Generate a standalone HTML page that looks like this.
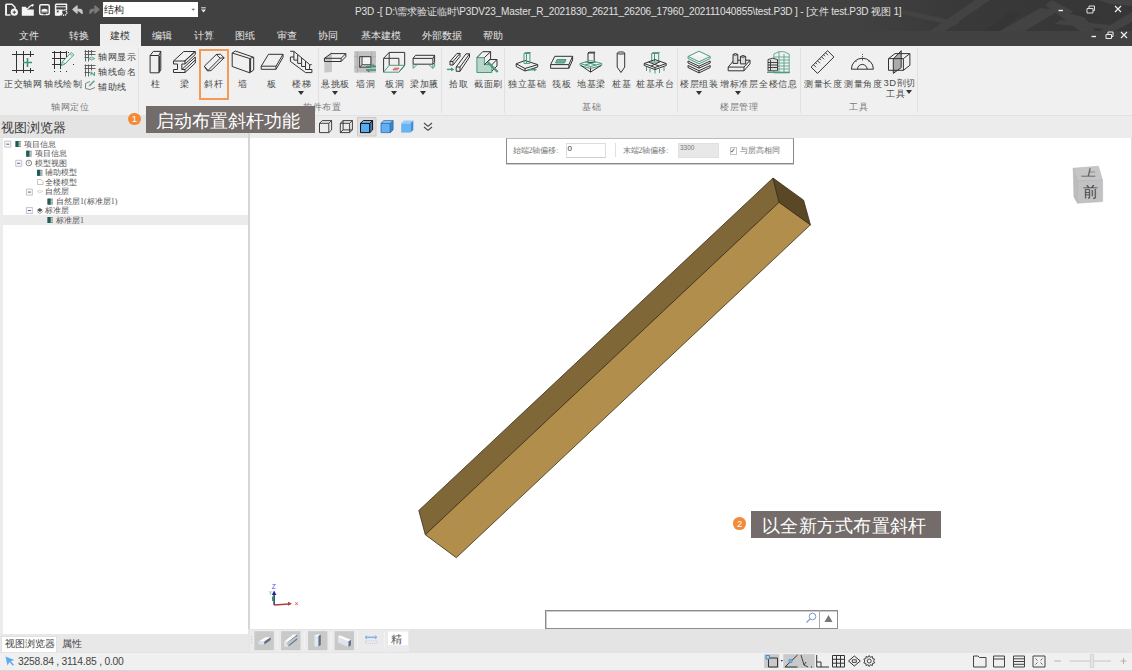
<!DOCTYPE html>
<html><head><meta charset="utf-8">
<style>
*{margin:0;padding:0;box-sizing:border-box}
html,body{width:1132px;height:671px;overflow:hidden;background:#f0f0f0;font-family:"Liberation Sans",sans-serif;color:#333}
.a{position:absolute}
.t{position:absolute;white-space:nowrap;line-height:1}
.tab{position:absolute;top:31px;font-size:10px;line-height:10px;color:#e6e6e6;white-space:nowrap}
.lbl{position:absolute;top:78.5px;font-size:9.4px;letter-spacing:0.6px;color:#4a4a4a;white-space:nowrap;line-height:10px}
.glbl{position:absolute;top:102px;font-size:9.4px;letter-spacing:0.6px;color:#7a7a7a;white-space:nowrap;line-height:10px}
.sep{position:absolute;top:48px;width:1px;height:65px;background:#e0e0e0}
.arr{position:absolute;top:91px;width:0;height:0;border-left:3.5px solid transparent;border-right:3.5px solid transparent;border-top:4.5px solid #333;margin-left:0.5px}
.tr{position:absolute;font-size:8px;line-height:9px;color:#555;white-space:nowrap;font-family:"Liberation Serif",serif}
.sl{position:absolute;font-size:9.4px;letter-spacing:0.6px;line-height:10px;color:#444;white-space:nowrap}
</style></head><body>
<!-- title + tabs -->
<div class="a" style="left:0;top:0;width:1132px;height:46px;background:#414141"></div>
<svg class="a" style="left:0;top:0" width="1132" height="31" viewBox="0 0 1132 31">
<defs><linearGradient id="tg" x1="0" x2="1" y1="0" y2="0"><stop offset="0" stop-color="#393939" stop-opacity="0"/><stop offset="0.35" stop-color="#393939" stop-opacity="1"/><stop offset="1" stop-color="#363636"/></linearGradient></defs>
<rect x="860" y="0" width="272" height="31" fill="url(#tg)"/>
<g fill="#434343">
<path d="M930 31L975 0H990L945 31Z"/>
<path d="M1000 31L1040 8L1060 10L1025 31Z"/>
<path d="M1052 0L1085 18L1095 31H1080L1045 5Z"/>
<path d="M1100 31L1132 12V22L1115 31Z"/>
<path d="M905 10L960 22L955 26L900 14Z"/>
<path d="M1060 20L1110 25L1105 29L1055 24Z"/>
<path d="M1098 0H1132V6L1110 4Z"/>
</g>
<g fill="#353535"><path d="M985 31L1010 12L1020 14L1000 31Z"/><path d="M1075 10L1100 15L1095 19L1070 14Z"/></g>
</svg>
<div class="a" style="left:103px;top:2px;width:95px;height:14.8px;background:#fff"></div>
<div class="t" style="left:104px;top:5px;font-size:10px;color:#222">结构</div>


<div class="t" style="left:355px;top:7px;font-size:10px;letter-spacing:-0.14px;color:#e0e0e0">P3D -[ D:\需求验证临时\P3DV23_Master_R_2021830_26211_26206_17960_202111040855\test.P3D ] - [文件 test.P3D 视图 1]</div>
<div class="a" style="left:100px;top:24px;width:41px;height:22px;background:#efefef"></div>
<div class="tab" style="left:19px">文件</div>
<div class="tab" style="left:69px">转换</div>
<div class="tab" style="left:110px;color:#333">建模</div>
<div class="tab" style="left:152px">编辑</div>
<div class="tab" style="left:194px">计算</div>
<div class="tab" style="left:235px">图纸</div>
<div class="tab" style="left:277px">审查</div>
<div class="tab" style="left:318px">协同</div>
<div class="tab" style="left:361px">基本建模</div>
<div class="tab" style="left:422px">外部数据</div>
<div class="tab" style="left:483px">帮助</div>

<!-- ribbon -->
<div class="a" style="left:0;top:46px;width:1132px;height:69px;background:#f0f0f0"></div>
<div class="lbl" style="left:4px">正交轴网</div>
<div class="lbl" style="left:44px">轴线绘制</div>
<div class="sl" style="left:98px;top:52px">轴网显示</div>
<div class="sl" style="left:98px;top:67px">轴线命名</div>
<div class="sl" style="left:98px;top:82px">辅助线</div>
<div class="glbl" style="left:51px">轴网定位</div>
<div class="sep" style="left:138px"></div>
<div class="lbl" style="left:151px">柱</div>
<div class="lbl" style="left:180px">梁</div>
<div class="a" style="left:199px;top:49px;width:30px;height:51px;border:2px solid #f39a56"></div>
<div class="lbl" style="left:204px">斜杆</div>
<div class="lbl" style="left:238px">墙</div>
<div class="lbl" style="left:267px">板</div>
<div class="lbl" style="left:292px">楼梯</div>
<div class="arr" style="left:297px"></div>
<div class="sep" style="left:318px"></div>
<div class="lbl" style="left:321px">悬挑板</div>
<div class="arr" style="left:331px"></div>
<div class="lbl" style="left:356px">墙洞</div>
<div class="lbl" style="left:385px">板洞</div>
<div class="arr" style="left:390px"></div>
<div class="lbl" style="left:410px">梁加腋</div>
<div class="arr" style="left:419px"></div>
<div class="glbl" style="left:303px">构件布置</div>
<div class="sep" style="left:441px"></div>
<div class="lbl" style="left:449px">拾取</div>
<div class="lbl" style="left:474px">截面刷</div>
<div class="sep" style="left:504px"></div>
<div class="lbl" style="left:508px">独立基础</div>
<div class="lbl" style="left:552px">筏板</div>
<div class="lbl" style="left:577px">地基梁</div>
<div class="lbl" style="left:612px">桩基</div>
<div class="lbl" style="left:636px">桩基承台</div>
<div class="glbl" style="left:582px">基础</div>
<div class="sep" style="left:677px"></div>
<div class="lbl" style="left:680px">楼层组装</div>
<div class="arr" style="left:695px"></div>
<div class="lbl" style="left:720px">增标准层</div>
<div class="arr" style="left:734px"></div>
<div class="lbl" style="left:759px">全楼信息</div>
<div class="glbl" style="left:720px">楼层管理</div>
<div class="sep" style="left:800px"></div>
<div class="lbl" style="left:804px">测量长度</div>
<div class="lbl" style="left:844px">测量角度</div>
<div class="lbl" style="left:883.5px;top:78px">3D剖切</div>
<div class="lbl" style="left:886px;top:89px">工具</div>
<div class="arr" style="left:905px;top:90px"></div>
<div class="glbl" style="left:849px">工具</div>
<div class="sep" style="left:917px"></div>

<!-- left panel -->
<div class="a" style="left:0;top:115px;width:248px;height:23px;background:#e4e4e4"></div>
<div class="t" style="left:1px;top:121px;font-size:13.3px;color:#3a3a3a">视图浏览器</div>
<div class="a" style="left:0;top:138px;width:248px;height:496px;background:#fff;border-left:3px solid #ececec"></div>
<div class="a" style="left:247.5px;top:116px;width:2.5px;height:513px;background:#d6d6d6"></div>
<div class="a" style="left:247.5px;top:629px;width:2.5px;height:23px;background:#e6e6e6"></div>
<div class="a" style="left:3px;top:215.4px;width:245px;height:10px;background:#ebebeb"></div>
<div class="a" style="left:0;top:634px;width:248px;height:18px;background:#e8e8e8"></div>
<div class="a" style="left:1px;top:636px;width:56px;height:15.5px;background:#fff;border:1px solid #e0e0e0;border-bottom:none"></div>
<div class="t" style="left:4.8px;top:639px;font-size:9.5px;color:#444">视图浏览器</div>
<div class="t" style="left:61.6px;top:639px;font-size:9.5px;color:#444">属性</div>


<!-- tree -->
<div class="tr" style="left:24px;top:139.5px">项目信息</div>
<div class="tr" style="left:34.5px;top:149px">项目信息</div>
<div class="tr" style="left:34.5px;top:158.5px">模型视图</div>
<div class="tr" style="left:45px;top:168px">辅助模型</div>
<div class="tr" style="left:45px;top:177.5px">全楼模型</div>
<div class="tr" style="left:45px;top:187px">自然层</div>
<div class="tr" style="left:56px;top:196.5px">自然层1(标准层1)</div>
<div class="tr" style="left:45px;top:206px">标准层</div>
<div class="tr" style="left:56px;top:215.5px">标准层1</div>

<!-- view toolbar -->
<div class="a" style="left:250px;top:115px;width:882px;height:23px;background:#ececec;border-top:1px solid #e2e2e2"></div>
<div class="a" style="left:357px;top:117px;width:19px;height:19px;background:#d8d8d8;border:1px solid #cfcfcf"></div>

<!-- viewport -->
<div class="a" style="left:250px;top:138px;width:881px;height:491px;background:#fff"></div>
<div class="a" style="left:1131px;top:138px;width:1px;height:491px;background:#dcdcdc"></div>

<!-- bottom toolbar -->
<div class="a" style="left:250px;top:629px;width:882px;height:23px;background:#e4e4e4"></div>
<div class="a" style="left:250px;top:629.5px;width:159px;height:22px;background:#ebebeb"></div>
<!-- status -->
<div class="a" style="left:0;top:652px;width:1132px;height:19px;background:#f0f0f0;border-top:1px solid #e4e4e4;border-bottom:1px solid #d8d8d8"></div>
<div class="t" style="left:18px;top:656.5px;font-size:10.3px;letter-spacing:-0.22px;color:#444">3258.84 , 3114.85 , 0.00</div>


<svg class="a" style="left:0;top:0" width="1132" height="671" viewBox="0 0 1132 671" fill="none" stroke="#333" stroke-width="1" stroke-linejoin="round">
<!-- quick access -->
<path d="M5.8 4.2H12L15 7.2V9M5.8 4.2V15H10.5" stroke="#f0f0f0" stroke-width="1.5" fill="none"/>
<path d="M6.5 5V14.5" stroke="#f0f0f0" stroke-width="1"/>
<circle cx="14.3" cy="12.2" r="3.6" fill="#f4f4f4" stroke="none"/>
<path d="M12.6 12.2H16M14.3 10.5V13.9" stroke="#414141" stroke-width="1"/>
<path d="M21.8 6.7H25.5L26.8 8H28.5L27 9.5H33.8V15.7H21.8Z" fill="#f4f4f4" stroke="none"/>
<path d="M28 8.5Q29.5 5.8 32.5 5.2" stroke="#f4f4f4" stroke-width="1.3"/>
<path d="M31.5 3.8L34.2 4.8L32.3 7Z" fill="#f4f4f4" stroke="none"/>
<rect x="39.7" y="4.8" width="9.6" height="9.8" rx="1.5" stroke="#f4f4f4" stroke-width="1.5"/>
<path d="M41.5 11.5V9.8Q44.5 7.8 47.5 9.8V11.5Z" fill="#f4f4f4" stroke="none"/>
<path d="M41.5 12H47.5" stroke="#f4f4f4" stroke-width="0.8"/>
<rect x="43" y="13" width="3" height="1.3" fill="#414141" stroke="none"/>
<path d="M55.6 4.2H66.5V10M55.6 4.2V15H60" stroke="#f4f4f4" stroke-width="1.5"/>
<path d="M55.6 6.8H66.5" stroke="#f4f4f4" stroke-width="1"/>
<path d="M55.6 9.5H62V15.4H55.6Z" fill="#f4f4f4" stroke="none"/>
<rect x="56.8" y="10.6" width="1.8" height="1.8" fill="#414141" stroke="none"/>
<circle cx="64.2" cy="12.6" r="2.6" fill="none" stroke="#f4f4f4" stroke-width="1.6" stroke-dasharray="1.2 0.8"/>
<path d="M73 9.5L77 6V13ZM76 9.5H80Q82 9.5 82 12V14" fill="#c8c8c8" stroke="#c8c8c8" stroke-width="1.4"/>
<path d="M99 9.5L95 6V13ZM96 9.5H92Q90 9.5 90 12V14" fill="#7a7a7a" stroke="#7a7a7a" stroke-width="1.4"/>
<path d="M191.5 8.8H195L193.25 10.8Z" fill="#666" stroke="none"/>
<path d="M201.2 7.8H205.8" stroke="#e8e8e8" stroke-width="1"/>
<path d="M201 9.5H206L203.5 12.5Z" fill="#e8e8e8" stroke="none"/>
<!-- 正交轴网 -->
<path d="M12 54.5H34M12 70.5H34M16.5 51V73M23.5 51V73M30.5 51V57M30.5 68V73" stroke="#333"/>
<path d="M27.5 58V67M23 62.5H32" stroke="#3f9478" stroke-width="1.6"/>
<!-- 轴线绘制 -->
<path d="M52 52.5H67M52 58.5H66M52 64.5H63M54.5 51V69M60.5 51V69M66.5 51V57"/>
<path d="M68 52.5H71M68 58.5H71M54.5 71V72.5M60.5 71V72.5M66.5 71V72.5M73 64.5H74" stroke-dasharray="1 2"/>
<path d="M61.5 65.5L62.3 61.8L71.2 52.5L73.8 54.8L65 64Z" fill="#eef6f2" stroke="#3f9478" stroke-width="0.9"/>
<path d="M62.3 61.8L65 64M70 53.8L72.5 56" stroke="#3f9478" stroke-width="0.7"/>
<!-- small buttons -->
<g stroke="#555" stroke-width="0.9">
<path d="M84.5 51.5H95.5M84.5 54.5H95.5M84.5 57.5H88.5M85.5 50V61.5M88.5 50V61.5M91.5 50V55.5"/>
<path d="M84.5 65.5H95.5M84.5 68.5H95.5M84.5 72.5H90M85.5 64.5V76.5M88.5 64.5V76.5M91.5 64.5V70.5"/>
</g>
<path d="M88.5 58.5Q91.5 55.5 95 58.5Q91.5 61.5 88.5 58.5Z" fill="#bfdccf" stroke="#5aa58b" stroke-width="0.8"/>
<path d="M91 75.5V72L94.5 75.5V72" stroke="#5aa58b" stroke-width="1.1"/>
<path d="M85.5 83.5L90 81.5M85.5 83.5V88.5Q90 91 95 87.5" stroke="#666" stroke-width="0.8"/>
<path d="M89.2 86L94.4 80.8" stroke="#5aa58b" stroke-width="1.6"/>
<!-- 柱 -->
<path d="M150.1 55.5H158.9V72.8H150.1ZM150.1 55.5L153.3 51.4H160.8L158.9 55.5M160.8 51.4V69.8L158.9 72.8M159.6 56V72"/>
<!-- 梁 -->
<path d="M173.5 61H185V64H181.8V69.5H185V72.5H173.5V69.5H177.5V64H173.5Z"/>
<path d="M173.5 61L183.8 51.5H195.3L185 61M195.3 51.5V54.5L185 64M195.3 54.5M185 69.5L195.3 60V63L185 72.5M181.8 69.5L195.3 57V60M184 61.5L194 52.5"/>
<!-- 斜杆 -->
<path d="M204.3 66.2L216.3 54.5L220.3 54.2L224.2 57.8L211 70.6L207.4 70.9ZM216.3 54.5L220.2 58.2L224.2 57.8M220.2 58.2L208 70.5M204.3 66.2L208 70.5"/>
<!-- 墙 -->
<path d="M232.2 53L249.7 58.5V72.8L232.2 66.5ZM232.2 53L235.4 51L253.7 57.3L249.7 58.5M253.7 57.3V70L249.7 72.8M250.6 59V72"/>
<!-- 板 -->
<path d="M261.2 66.2L268.5 54.3H283L276 66.2ZM261.2 66.2V69.3H276L283 57.4V54.3M276 66.2V69.3"/>
<!-- 楼梯 -->
<path d="M290.2 51.3H293.9L309.8 64.7H311.7M293.9 51.8V57M297.7 54.8V60.1M301.6 58V63.4M305.5 61.3V66.5M309.6 64.7V69.5" stroke-width="1"/>
<path d="M290.4 57H293.9V60.1H297.7V63.4H301.6V66.5H305.5V69.5H311.9V72.6H305.6L290.4 61.4Z" stroke-width="1"/>
</svg>

<svg class="a" style="left:0;top:0" width="1132" height="671" viewBox="0 0 1132 671" fill="none" stroke="#333" stroke-width="1" stroke-linejoin="round">
<!-- 悬挑板 -->
<path d="M324.4 61.5L331.9 65.5V51.5L324.4 58.5Z" fill="#c4c4c4" stroke="none"/>
<path d="M324.4 72.6V61.5L331.9 65.5V72" fill="#c8c8c8" stroke="none"/>
<path d="M324.4 58.3L331.1 53.6H345.8L341.1 58.3ZM324.4 58.3V61.5H341.1V58.3M341.1 61.5L345.8 56.7V53.6"/>
<!-- 墙洞 -->
<rect x="354.2" y="51.2" width="21.8" height="21.4" fill="#c2c2c2" stroke="none"/>
<path d="M357.4 51.2V72.6M371.7 51.2V72.6M354.2 56.7H376M354.2 67.1H376" stroke="#a8a8a8" stroke-width="0.8"/>
<rect x="359.7" y="56.7" width="11.2" height="10.4" fill="#f4f4f4" stroke="#333"/>
<path d="M362 56.7V64.8H370.9M362 64.8L359.7 67.1"/>
<path d="M366 66.5H376M372.5 64.5L375 66.5M376 70H366M369.5 72L367 70" stroke="#3f9478" stroke-width="1.5"/>
<!-- 板洞 -->
<path d="M383.6 58.3L389.2 52.4H404.7V65.1L398.9 72.2M383.6 58.3V72.2M383.6 58.3H398.9V65M389.2 52.4V65.1"/>
<path d="M383.6 72.2H398.9L404.9 65.3H389.2Z" stroke="#4a9a7e"/>
<path d="M393 69.8L394.5 68.2H399L397.5 69.8Z" stroke="#e04545" stroke-width="1"/>
<!-- 梁加腋 -->
<path d="M413.1 58.4H432.9V64.2H413.1ZM413.1 58.4L415.5 55.3H434.6L432.9 58.4M434.6 55.3V62.5L432.9 64.2"/>
<path d="M413.1 64.2V68.3L417.5 64.2M432.9 64.2V68.3L428.5 64.2M434.6 62.5V66.5L432.9 68.3" stroke="#4a9a7e"/>
<!-- 拾取 -->
<path d="M450 61.5L457 53.4H460L460 56.5L453 65H450ZM453 61.5L460 53.4M450 61.5H453V65"/>
<path d="M456.2 67L466 53.8H469.5V57L460 71.3H456.2ZM460 67L469.5 53.8M456.2 67H460V71.3"/>
<path d="M447 69.4H453" stroke="#4a9a7e" stroke-width="1.4"/>
<path d="M451 67.5L454.5 69.4L451 71.3Z" fill="#4a9a7e" stroke="none"/>
<!-- 截面刷 -->
<path d="M476.9 57.6H484.4V64.6H491.9V72.5H476.9Z" fill="#b8d6c9" stroke="#4a9a7e"/>
<path d="M476.9 57.6L482.7 51.7H490.6L484.4 57.6M490.6 51.7V58.7L484.4 64.6M484.4 64.6L490 59.5H497V66L491.9 71M497 59.5L491.9 64.6"/>
<path d="M487.7 62.1L497.7 72" stroke="#4a9a7e" stroke-width="2.2"/>
<!-- 独立基础 -->
<path d="M516.2 63.8L525 60.5L537.7 64.6L525 68.5ZM516.2 63.8V66.5L525 71L537.7 67V64.6M525 68.5V71"/>
<path d="M524 53.5H529.9V63.4H524ZM524 53.5L525.5 52.5H530.5L529.9 53.5M526.5 53.5V63" stroke="#4a9a7e"/>
<path d="M528 70L535 69.5" stroke="#4a9a7e" stroke-width="1.3"/>
<path d="M534 67.5L537 69.5L534 71.5Z" fill="#4a9a7e" stroke="none"/>
<!-- 筏板 -->
<path d="M550.6 64.6L554.8 56.3H572.6L568.9 64.6ZM550.6 64.6V68.3H568.9L572.6 60V56.3M568.9 64.6V68.3"/>
<path d="M557 59.5H566L564.5 63H555.5Z" fill="#6fae96" stroke="#4a9a7e"/>
<!-- 地基梁 -->
<path d="M588 53H594.2V62.5H588ZM588 53L589 52.2H595L594.2 53"/>
<path d="M580.1 63.5L590.5 60.5L601.7 63.5L590.5 66.5ZM580.1 63.5V65.5L590.5 68.5L601.7 65.5V63.5M590.5 66.5V68.5M585 62L596 65M596 62L585 65" stroke="#4a9a7e"/>
<path d="M581 65.5L590.5 72.1L601 65.5M590.5 68.5V72.1"/>
<!-- 桩基 -->
<ellipse cx="621" cy="53" rx="3.7" ry="1.1"/>
<path d="M617.2 53V67.1L621 72.5L624.7 67.1V53"/>
<!-- 桩基承台 -->
<path d="M651.7 53.5H658.7V62.1H651.7ZM651.7 53.5L653 52.6H659.5L658.7 53.5M654.5 53.5V62" stroke="#4a9a7e"/>
<path d="M644.2 63.5L655 59.6L666.2 63.5L655 67.5ZM644.2 63.5V65.5L655 69.6L666.2 65.5V63.5M655 67.5V69.6M648.5 62L659 66M660.5 61.5L651 66"/>
<path d="M646.5 67V71M650 68.5V72.5M655 70V73.5M659.5 69V73M664 67V71" stroke="#4a9a7e"/>
<!-- 楼层组装 -->
<path d="M688 56.5L699 51.2L710.2 56.5L699 61.8ZM688 56.5V58.5L699 63.8L710.2 58.5V56.5" stroke="#4a9a7e" fill="#f6f6f6"/>
<path d="M688 61L699 66.2L710.2 61M688 61V63L699 68.2L710.2 63V61M688 65.5L699 70.7L710.2 65.5M688 65.5V67.5L699 72.9L710.2 67.5V65.5M699 66.2V68.2M699 70.7V72.9"/>
<!-- 增标准层 -->
<path d="M728.2 67.1L734 60.2H750L744 67.1ZM728.2 67.1V70.8H744L750 63.8V60.2M744 67.1V70.8"/>
<path d="M733 54.5V63.4H737.8V54.5M733 54.5Q735.4 52.5 737.8 54.5Q735.4 56 733 54.5" fill="#ddd"/>
<path d="M740.4 56.5V63.9H745.7V56.5M740.4 56.5Q743 54.5 745.7 56.5Q743 58 740.4 56.5" fill="#ddd"/>
<!-- 全楼信息 -->
<path d="M773.8 54L779 51.7H784L789.2 54V72.9H773.8ZM779 51.7V72.9M784 54V72.9M773.8 57H789.2M773.8 60H789.2M773.8 63H789.2M773.8 66H789.2M773.8 69H789.2" stroke="#4a9a7e" stroke-width="0.8"/>
<path d="M768 59.5Q772.5 57 777.5 59.5V70.8H768ZM768 62.5H777.5M768 65H777.5M768 67.5H777.5M770.5 60V70.8" stroke="#333" stroke-width="0.9" fill="#ddd"/>
<path d="M767 72.3H790" stroke="#4a9a7e" stroke-width="1.3"/>
<!-- 测量长度 -->
<path d="M811.1 67.1L827.6 50.7L833.9 57L817.5 73.4Z"/>
<path d="M813.5 64.7L816 67.2M815.5 62.7L817 64.2M817.5 60.7L820 63.2M819.5 58.7L821 60.2M821.5 56.7L824 59.2M823.5 54.7L825 56.2M825.5 52.7L828 55.2" stroke-width="0.9"/>
<!-- 测量角度 -->
<path d="M851.4 69.2A11 11 0 0 1 873.4 69.2ZM857.5 69.2A4.8 4.8 0 0 1 867.1 69.2"/>
<path d="M862.5 54V59.5" stroke-width="0.8" stroke-dasharray="1 1"/>
<path d="M862.5 58.5V60.5M855.5 61L856.5 62M869.5 61L868.5 62" stroke-width="0.8"/>
<!-- 3D剖切 -->
<path d="M893.3 59L901.2 50.7V67.6L893.3 73.4Z" fill="#aaa" stroke="#333"/>
<path d="M888.5 58.6H903.4V70.3H888.5ZM888.5 58.6L895 53.6H909.9L903.4 58.6M909.9 53.6V65.3L903.4 70.3"/>
</svg>

<svg class="a" style="left:0;top:0" width="1132" height="671" viewBox="0 0 1132 671" fill="none" stroke="#333" stroke-width="1" stroke-linejoin="round">
<defs>
<g id="ti"><rect x="0" y="0" width="5.5" height="6" fill="#8a9a98" stroke="none"/><rect x="0" y="0" width="3.2" height="6" fill="#1d5e57" stroke="none"/><path d="M3.2 1.5H5.5M3.2 3H5.5M3.2 4.5H5.5" stroke="#eee" stroke-width="0.55"/></g>
<g id="cb"><rect x="0.5" y="0.5" width="6" height="6" fill="#fafafa" stroke="#b8b8b8" stroke-width="0.8"/><path d="M2 3.5H5" stroke="#3b4fa8" stroke-width="0.9"/></g>
</defs>
<!-- tree icons -->
<use href="#cb" x="4.3" y="140.7"/><use href="#ti" x="15.5" y="141"/>
<use href="#ti" x="26.2" y="150.7"/>
<use href="#cb" x="15.2" y="159.8"/>
<circle cx="28.8" cy="163" r="2.8" stroke="#555" stroke-width="0.7"/><path d="M28.8 161.5V163.5" stroke="#555" stroke-width="0.7"/>
<use href="#ti" x="37" y="169.8"/>
<path d="M37.5 179.5V184.5H43V181.5L41 179.5Z" stroke="#aaa" stroke-width="0.7"/>
<use href="#cb" x="25.9" y="188.6"/>
<path d="M37 191.5Q39.8 189 42.7 191.5Q39.8 194 37 191.5" stroke="#ccc" stroke-width="0.7"/>
<use href="#ti" x="47.5" y="198.6"/>
<use href="#cb" x="25.9" y="207"/>
<path d="M37 210L39.8 208L42.7 210L39.8 212Z" fill="#555" stroke="none"/><path d="M37 211.5L39.8 213.5L42.7 211.5" stroke="#777" stroke-width="0.7"/>
<use href="#ti" x="47.5" y="217"/>
<!-- view toolbar cubes -->
<g stroke="#2e2e2e" stroke-width="0.9">
<path d="M319.5 123.3H328.8V132.6H319.5ZM319.5 123.3L322.3 120.6H331.6L328.8 123.3M331.6 120.6V129.9L328.8 132.6"/>
<path d="M340.3 123.3H349.6V132.6H340.3ZM340.3 123.3L343.1 120.6H352.4L349.6 123.3M352.4 120.6V129.9L349.6 132.6M343.1 120.6V129.9H352.4M343.1 129.9L340.3 132.6" />
</g>
<rect x="357.5" y="117.5" width="18.5" height="18.5" fill="#dedede" stroke="#cacaca"/>
<path d="M360.5 123.3H369.8V132.6H360.5Z" fill="#5aacf0" stroke="#111" stroke-width="1"/>
<path d="M360.5 123.3L363.3 120.6H372.6L369.8 123.3Z" fill="#8cc6f6" stroke="#111" stroke-width="1"/>
<path d="M372.6 120.6V129.9L369.8 132.6V123.3Z" fill="#3a7fc0" stroke="#111" stroke-width="1"/>
<path d="M381 123.3H390.3V132.6H381Z" fill="#62b0f2" stroke="#2f6fb0" stroke-width="0.8"/>
<path d="M381 123.3L383.8 120.6H393.1L390.3 123.3Z" fill="#8cc6f6" stroke="#2f6fb0" stroke-width="0.8"/>
<path d="M393.1 120.6V129.9L390.3 132.6V123.3Z" fill="#3a86cc" stroke="#2f6fb0" stroke-width="0.8"/>
<path d="M401.2 123.3H410.5V132.6H401.2Z" fill="#66b4f4" stroke="none"/>
<path d="M401.2 123.3L404 120.6H413.3L410.5 123.3Z" fill="#96ccf7" stroke="none"/>
<path d="M413.3 120.6V129.9L410.5 132.6V123.3Z" fill="#3f8fd6" stroke="none"/>
<path d="M424 123L428 126.3L432 123M424 127L428 130.3L432 127" stroke="#444" stroke-width="1.1"/>
<!-- axis -->
<path d="M274.1 605V594" stroke="#2a2a8a" stroke-width="1.5"/>
<path d="M271.8 595L274.1 590.5L276.4 595Z" fill="#2a2a8a" stroke="none"/>
<path d="M274.1 605L289 603.9" stroke="#a84040" stroke-width="1.5"/>
<path d="M288 601.8L292 603.8L288 605.8Z" fill="#a84040" stroke="none"/>
<path d="M272.8 596.5L273 601" stroke="#2a9a3a" stroke-width="1.8"/>
<text x="271.8" y="589" font-size="6.5" fill="#5050f0" stroke="none" font-family="Liberation Sans">Z</text>
<text x="294.5" y="606" font-size="7" fill="#e04040" stroke="none" font-family="Liberation Sans">×</text>
<text x="268.5" y="595" font-size="5.5" fill="#40c040" stroke="none" font-family="Liberation Sans">Y</text>
</svg>

<svg class="a" style="left:0;top:0" width="1132" height="671" viewBox="0 0 1132 671" fill="none" stroke="#333" stroke-width="1" stroke-linejoin="round">
<!-- window controls -->
<path d="M1058.5 10.5H1063" stroke="#eee" stroke-width="1.4"/>
<path d="M1087 8.5H1093V13H1087ZM1089 8.5V6H1094.5V10.5H1093" stroke="#ddd" stroke-width="1"/>
<path d="M1115 6L1121 12M1121 6L1115 12" stroke="#eee" stroke-width="1.2"/>
<path d="M1091.5 36.5H1096" stroke="#eee" stroke-width="1.4"/>
<path d="M1106 34.5H1111.5V38.5H1106ZM1108 34.5V32H1113V36.5H1111.5" stroke="#eee" stroke-width="1"/>
<path d="M1121 32L1127 38M1127 32L1121 38" stroke="#eee" stroke-width="1.2"/>
<!-- bottom toolbar -->
<path d="M251.5 636V637.5M251.5 639V640.5M251.5 642V643.5" stroke="#c4c4c4" stroke-width="0.8"/>
<rect x="254.4" y="631.2" width="19.4" height="19" fill="#c9c9c9" stroke="none"/>
<rect x="281.1" y="631.2" width="19.4" height="19" fill="#c9c9c9" stroke="none"/>
<rect x="308" y="631.2" width="19.4" height="19" fill="#c9c9c9" stroke="none"/>
<rect x="334.6" y="631.2" width="19.4" height="19" fill="#c9c9c9" stroke="none"/>
<path d="M277.6 632V649M304.2 632V649M330.8 632V649M357.5 632V649M384.5 632V649" stroke="#f3f3f3" stroke-width="1"/>
<path d="M258.6 641.6L265.7 637.3H270.7L264.3 641.6Z" fill="#fdfdfd" stroke="none"/>
<path d="M258.6 641.6H264.3V644.5H258.6Z" fill="#dde3ea" stroke="none"/>
<path d="M264.3 641.6L270.7 637.3V640L264.3 644.5Z" fill="#5f7088" stroke="none"/>
<path d="M284.3 641.5L293 634.4H297.2L288.5 641.5Z" fill="#fdfdfd" stroke="none"/>
<path d="M284.3 641.5H288.5V643H286.5V645H288.5V646.6H284.3Z" fill="#e4e8ee" stroke="none"/>
<path d="M288.5 641.5L297.2 634.4V636L288.5 643ZM288.5 645L297.2 638V639.8L288.5 646.6Z" fill="#6a7a90" stroke="none"/>
<path d="M287 643L296 636.2V638L287 645Z" fill="#b8c2d0" stroke="none"/>
<path d="M314.4 636H318.5V646.6H314.4Z" fill="#e2e8f0" stroke="none"/>
<path d="M314.4 636L316.5 634.4H320.8L318.5 636Z" fill="#fdfdfd" stroke="none"/>
<path d="M318.5 636L320.8 634.4V645L318.5 646.6Z" fill="#5f7088" stroke="none"/>
<path d="M338 637L348.5 641.5V646.9L338 642.5Z" fill="#dfe5ee" stroke="none"/>
<path d="M338 637L339.5 635.2L350.9 639.8L348.5 641.5Z" fill="#fdfdfd" stroke="none"/>
<path d="M348.5 641.5L350.9 639.8V645.3L348.5 646.9Z" fill="#5f7088" stroke="none"/>
<path d="M365.5 637.3H376.5" stroke="#7fb4e8" stroke-width="1.6"/>
<path d="M367 635.5L365 637.3L367 639.1M375 635.5L377 637.3L375 639.1" stroke="#7fb4e8" stroke-width="1"/>
<rect x="365.5" y="641" width="11.5" height="2.2" fill="#eef2f6" stroke="#a8b4c4" stroke-width="0.6" stroke-dasharray="1 0.8"/>
<rect x="388" y="631.6" width="20" height="13.6" fill="#fff" stroke="none"/>
<!-- status bar left arrow -->
<path d="M5.5 656.5L14.4 660L10.8 661.2L14.2 665L12.6 665.5L9.5 662L7.5 665.5Z" fill="#5aacf0" stroke="none"/>
<!-- status icons -->
<rect x="764.2" y="654.2" width="15" height="13.8" fill="#c9c9c9" stroke="none"/>
<rect x="783.3" y="654.2" width="31.3" height="13.8" fill="#c9c9c9" stroke="none"/>
<path d="M768.5 658H777.5V667H768.5Z" stroke="#333" stroke-width="1"/>
<rect x="766" y="655.5" width="3.5" height="3.5" fill="#c9c9c9" stroke="#3c8ad8" stroke-width="1"/>
<path d="M780.5 660L783 660L781.75 661.8Z" fill="#444" stroke="none"/>
<path d="M785 667H797.5M785 667L797.5 655" stroke="#333" stroke-width="1"/>
<rect x="789" y="659.5" width="3" height="3" fill="#6fb0f0" stroke="#3c8ad8" stroke-width="0.6"/>
<path d="M801 655L804 665L808 667M804 665L806 662" stroke="#333" stroke-width="0.9"/>
<path d="M811 667H812" stroke="#333" stroke-width="1"/>
<path d="M816.7 655V667H829M816.7 662H821V667" stroke="#333" stroke-width="1"/>
<path d="M832.5 655.5H844.5V667H832.5ZM836.5 655.5V667M840.5 655.5V667M832.5 659.3H844.5M832.5 663.2H844.5" stroke="#333" stroke-width="1"/>
<path d="M848.5 661L854.3 656L860.3 661L854.3 666Z" stroke="#333" stroke-width="1"/>
<rect x="852.3" y="659.8" width="4" height="2.6" stroke="#333" stroke-width="0.9"/>
<circle cx="869.2" cy="661" r="2" stroke="#333" stroke-width="0.9"/>
<path d="M869.2 655.5L870.3 657.3L872.4 656.5L872.5 658.6L874.6 659L873.6 661L874.6 663L872.5 663.4L872.4 665.5L870.3 664.7L869.2 666.5L868.1 664.7L866 665.5L865.9 663.4L863.8 663L864.8 661L863.8 659L865.9 658.6L866 656.5L868.1 657.3Z" stroke="#333" stroke-width="0.9"/>
<path d="M973.5 656V667H986V657.5H979.5L978 656Z" stroke="#444" stroke-width="1"/>
<path d="M993.5 656H1004.5V667H993.5ZM993.5 659H1004.5" stroke="#444" stroke-width="1"/>
<path d="M1013.5 656H1024.5V667H1013.5ZM1013.5 658.8H1024.5M1013.5 661.5H1024.5M1013.5 664.3H1024.5" stroke="#444" stroke-width="1"/>
<path d="M1033 656H1045V667H1033Z" stroke="#444" stroke-width="1"/>
<path d="M1035.5 658.5L1037.5 660.5M1042.5 658.5L1040.5 660.5M1035.5 664.5L1037.5 662.5M1042.5 664.5L1040.5 662.5" stroke="#444" stroke-width="0.8"/>
<path d="M1054.3 661H1060.9" stroke="#aaa" stroke-width="0.9"/>
<path d="M1069.8 661H1111" stroke="#bbb" stroke-width="0.8"/>
<rect x="1090.4" y="654.5" width="3.2" height="13" fill="#e4e4e4" stroke="#c4c4c4" stroke-width="0.6"/>
<path d="M1120.6 661H1126.5M1123.55 658V664" stroke="#aaa" stroke-width="0.9"/>
</svg>

<!-- viewport contents -->
<svg class="a" style="left:0;top:0" width="1132" height="671" viewBox="0 0 1132 671" stroke-linejoin="round">
<!-- beam -->
<path d="M773 178L779.1 202.3L425.3 534.7L418.8 510.5Z" fill="#7f6737" stroke="#3a2e18" stroke-width="0.8"/>
<path d="M779.1 202.3L810.4 224.8L456.3 557.7L425.3 534.7Z" fill="#b18e4b" stroke="#3a2e18" stroke-width="0.8"/>
<path d="M773 178L803.6 200.2L810.4 224.8L779.1 202.3Z" fill="#5a4726" stroke="#3a2e18" stroke-width="0.8"/>
<!-- view cube -->
<path d="M1073.2 168.2L1098.4 166.2L1102.6 180.2L1077.5 181.3Z" fill="#c6c6c6" stroke="#b0b0b0" stroke-width="0.5"/>
<path d="M1077.5 181.3L1102.6 180.2L1102.6 201.6L1077.5 203.2Z" fill="#c2c2c2" stroke="#b0b0b0" stroke-width="0.5"/>
<path d="M1073.2 168.2L1077.5 181.3L1077.5 203.2L1073.9 196.9Z" fill="#bdbdbd" stroke="#b0b0b0" stroke-width="0.5"/>
</svg>
<div class="t" style="left:1082px;top:165.5px;font-size:15px;color:#555;font-family:'Liberation Serif',serif;transform:scaleY(0.62) skewX(-8deg)">上</div>
<div class="t" style="left:1083px;top:185px;font-size:15px;color:#444;font-family:'Liberation Serif',serif">前</div>
<!-- dialog -->
<div class="a" style="left:506px;top:138px;width:288px;height:26px;background:#fff;border:1px solid #8a8a8a;border-top-color:#bbb;box-shadow:0 1px 0 #ccc"></div>
<div class="t" style="left:512.5px;top:147px;font-size:7.5px;color:#777;font-family:'Liberation Serif',serif">始端2轴偏移:</div>
<div class="a" style="left:565.5px;top:143px;width:40px;height:14.5px;background:#fff;border:1px solid #dedede;border-bottom-color:#cfcfcf"></div>
<div class="t" style="left:567.5px;top:144.5px;font-size:8px;color:#333">0</div>
<div class="a" style="left:614.5px;top:143px;width:1px;height:14px;background:#e0e0e0"></div>
<div class="t" style="left:622.5px;top:147px;font-size:7.5px;color:#777;font-family:'Liberation Serif',serif">末端2轴偏移:</div>
<div class="a" style="left:678px;top:143px;width:41px;height:14.5px;background:#e8e8e8;border:1px solid #e0e0e0"></div>
<div class="t" style="left:680px;top:145px;font-size:6.5px;color:#777">3300</div>
<div class="a" style="left:729.5px;top:147px;width:7.5px;height:7.5px;background:#fff;border:1px solid #c4c4c4"></div>
<div class="t" style="left:730.3px;top:147px;font-size:7px;color:#444">&#10003;</div>
<div class="t" style="left:739.5px;top:147px;font-size:7.5px;color:#777;font-family:'Liberation Serif',serif">与层高相同</div>
<!-- search box -->
<div class="a" style="left:544.5px;top:609.5px;width:293px;height:19px;background:#fff;border:1px solid #8c8c8c;box-shadow:inset 1px 1px 0 #ccc"></div>
<div class="a" style="left:819px;top:610px;width:1px;height:18px;background:#aaa"></div>
<svg class="a" style="left:800px;top:608px" width="40" height="22" viewBox="800 608 40 22" fill="none">
<circle cx="812.5" cy="616.5" r="3.3" stroke="#7a9ac8" stroke-width="1"/>
<path d="M810.2 618.8L806.5 622.5" stroke="#7a9ac8" stroke-width="1.2"/>
<path d="M824.5 622L828.5 615L832.5 622Z" fill="#777"/>
</svg>
<!-- callout 1 -->
<div class="a" style="left:146px;top:106px;width:169px;height:27px;background:#736c6a"></div>
<div class="t" style="left:156px;top:112px;font-size:18px;color:#fff">启动布置斜杆功能</div>
<div class="a" style="left:128px;top:112.6px;width:12.6px;height:12.6px;border-radius:50%;background:#f28a38"></div>
<div class="t" style="left:131.8px;top:114.2px;font-size:9.5px;color:#fff">1</div>
<!-- callout 2 -->
<div class="a" style="left:751px;top:511px;width:190px;height:27px;background:#736c6a"></div>
<div class="t" style="left:762px;top:517px;font-size:18px;letter-spacing:0.25px;color:#fff">以全新方式布置斜杆</div>
<div class="a" style="left:733.3px;top:517px;width:12.8px;height:12.8px;border-radius:50%;background:#f28a38"></div>
<div class="t" style="left:737px;top:519px;font-size:9.5px;color:#fff">2</div>

<div class="t" style="left:390.5px;top:633.5px;font-size:10.5px;color:#555">精</div>

</body></html>
